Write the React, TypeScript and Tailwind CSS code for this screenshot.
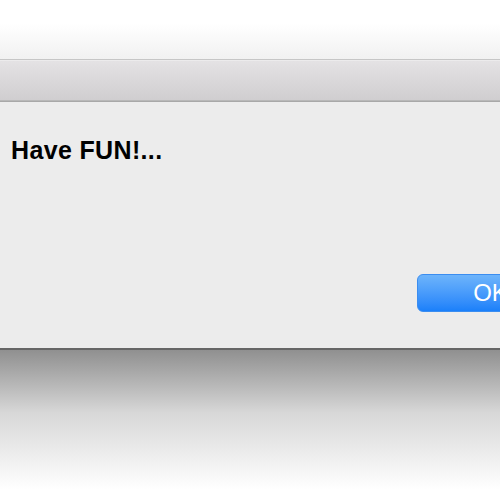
import React from "react";

export default function App() {
  return (
    <div
      className="w-[500px] h-[500px] overflow-hidden flex flex-col bg-white"
      style={{ fontFamily: '"Liberation Sans", Arial, sans-serif' }}
    >
      <div className="h-[59px] bg-gradient-to-b from-white from-40% to-[#f1f1f1]" />
      <div className="h-px bg-[#c6c6c6]" />
      <div className="h-[40px] border-t border-[#ecebec] bg-gradient-to-b from-[#e4e2e4] to-[#d0ced0]" />
      <div className="h-px bg-[#b8b8b8]" />
      <div className="h-px bg-[#a8a8a8]" />
      <div className="h-[246px] bg-[#ececec] flex flex-col pt-[36px] pl-[11px]">
        <div className="text-[25px] leading-none font-bold text-black tracking-[0.35px]">Have FUN!...</div>
        <div className="mt-[111px] ml-[406px] w-[147px] h-[38px] shrink-0 rounded-[6px] border border-[#3b8df0] bg-gradient-to-b from-[#6db4fb] to-[#1a80fa] flex items-center justify-center">
          <span className="text-[24px] leading-none text-white">OK</span>
        </div>
      </div>
      <div className="h-[2px] bg-[#666666]" />
      <div className="h-[140px] bg-gradient-to-b from-[#909090] via-[#d8d8d8] via-45% to-white" />
      <div className="flex-1 bg-white" />
    </div>
  );
}
